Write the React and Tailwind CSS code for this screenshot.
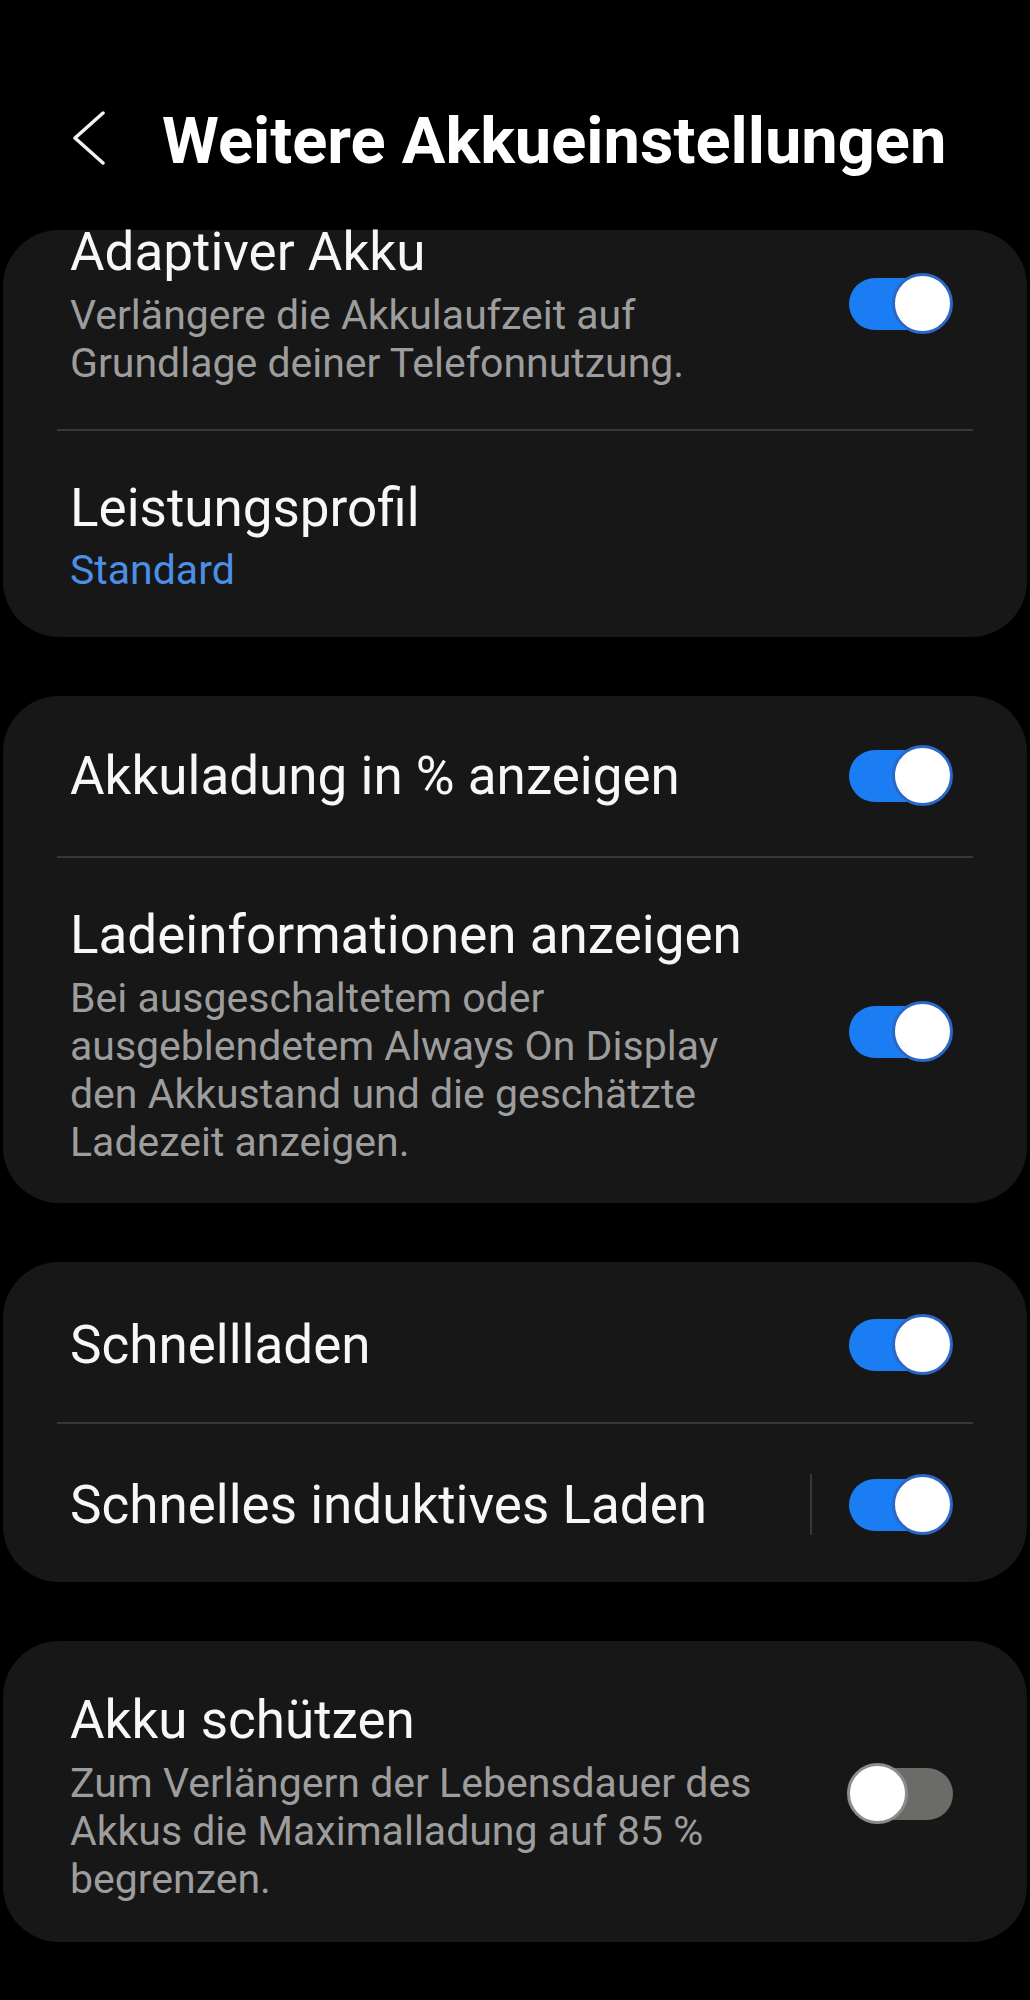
import React from 'react';

const font = { fontFamily: 'Roboto, "Noto Sans", sans-serif' };

const Toggle = ({ on, className = '' }) => (
  <div className={`relative w-[106px] h-[60px] shrink-0 ${className}`}>
    {on ? (
      <>
        <div className="absolute left-[2px] top-[4px] w-[96px] h-[52px] rounded-full bg-[#1a7df4]" />
        <div className="absolute right-0 top-[-1px] w-[61px] h-[61px] rounded-full bg-white border-[3px] border-[#2a68c8]" />
      </>
    ) : (
      <>
        <div className="absolute right-0 top-[4px] w-[96px] h-[52px] rounded-full bg-[#6b6b67]" />
        <div className="absolute left-0 top-[-1px] w-[61px] h-[61px] rounded-full bg-white border-[3px] border-[#8c8c8c]" />
      </>
    )}
  </div>
);

const Row = ({ title, sub, subBlue, toggle, toggleClass, pt, pb, titleClass = 'leading-[60px]', subClass = 'mt-[9px]', separator }) => (
  <div className={`flex items-center pl-[67px] pr-[74px] ${pt} ${pb}`}>
    <div className="flex-1 min-w-0">
      <div className={`text-[53px] text-[#f7f7f7] whitespace-nowrap ${titleClass}`}>{title}</div>
      {sub && (
        <div className={`text-[41px] leading-[48px] ${subBlue ? 'text-[#4c8fe8]' : 'text-[#9d9d9d]'} ${subClass}`}>
          {sub.map((line, i) => (
            <div key={i} className="whitespace-nowrap">{line}</div>
          ))}
        </div>
      )}
    </div>
    {separator && <div className="w-[2px] h-[61px] bg-[#383838] mr-[35px] shrink-0" />}
    {toggle !== undefined && <Toggle on={toggle} className={toggleClass} />}
  </div>
);

const Divider = () => <div className="mx-[54px] h-[2px] bg-[#383838]" />;

const Card = ({ children }) => (
  <div className="mx-[3px] rounded-[56px] bg-[#171717]">{children}</div>
);

export default function App() {
  return (
    <div className="w-full min-h-[2000px] bg-black" style={font}>
      {/* Header */}
      <div className="flex items-center pl-[73px] pt-[103px]">
        <svg width="32" height="54" viewBox="0 0 32 54" className="mb-[6px] shrink-0">
          <polyline points="30,2 2,27 30,52" fill="none" stroke="#f2f2f2" strokeWidth="3.5" strokeLinecap="round" strokeLinejoin="round" />
        </svg>
        <h1 className="ml-[57px] text-[65px] leading-[76px] font-bold text-white whitespace-nowrap">
          Weitere Akkueinstellungen
        </h1>
      </div>

      <div className="mt-[51px] flex flex-col gap-[59px]">
        <Card>
          <Row
            title="Adaptiver Akku"
            titleClass="leading-[44px]"
            subClass="mt-[17px]"
            sub={['Verlängere die Akkulaufzeit auf', 'Grundlage deiner Telefonnutzung.']}
            toggle={true}
            toggleClass="mb-[10px]"
            pt="pt-0"
            pb="pb-[42px]"
          />
          <Divider />
          <Row
            title="Leistungsprofil"
            sub={['Standard']}
            subBlue
            subClass="mt-[8px]"
            pt="pt-[47px]"
            pb="pb-[43px]"
          />
        </Card>

        <Card>
          <Row title="Akkuladung in % anzeigen" toggle={true} pt="pt-[50px]" pb="pb-[50px]" />
          <Divider />
          <Row
            title="Ladeinformationen anzeigen"
            sub={[
              'Bei ausgeschaltetem oder',
              'ausgeblendetem Always On Display',
              'den Akkustand und die geschätzte',
              'Ladezeit anzeigen.',
            ]}
            toggle={true}
            toggleClass="mb-[8px]"
            pt="pt-[47px]"
            pb="pb-[37px]"
          />
        </Card>

        <Card>
          <Row title="Schnellladen" toggle={true} pt="pt-[53px]" pb="pb-[47px]" />
          <Divider />
          <Row title="Schnelles induktives Laden" toggle={true} separator pt="pt-[50px]" pb="pb-[47px]" />
        </Card>

        <Card>
          <Row
            title="Akku schützen"
            sub={[
              'Zum Verlängern der Lebensdauer des',
              'Akkus die Maximalladung auf 85 %',
              'begrenzen.',
            ]}
            toggle={false}
            toggleClass="mb-[6px]"
            pt="pt-[49px]"
            pb="pb-[39px]"
          />
        </Card>
      </div>
    </div>
  );
}
